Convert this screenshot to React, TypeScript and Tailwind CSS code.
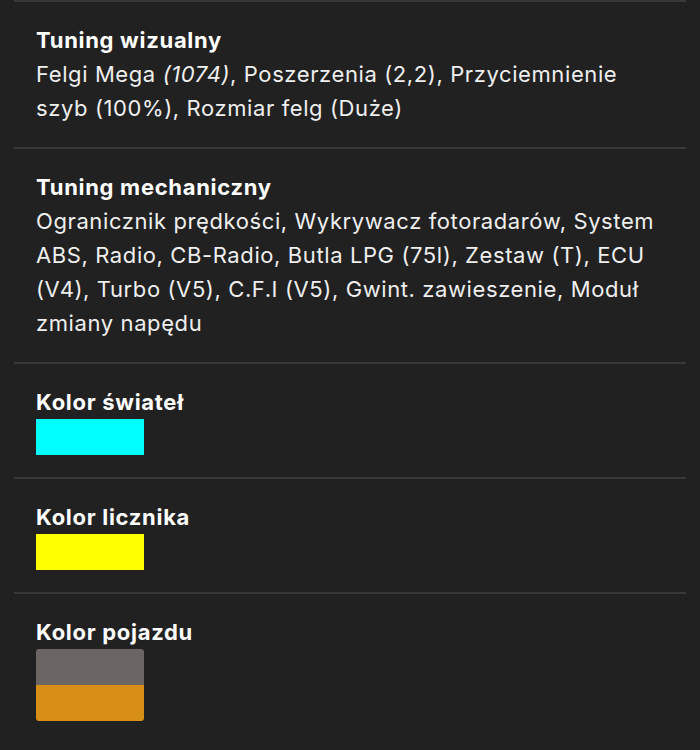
import React from "react";

type Section = {
  title: string;
  body?: React.ReactNode;
  swatches?: string[];
};

const sections: Section[] = [
  {
    title: "Tuning wizualny",
    body: (
      <>
        Felgi Mega <em>(1074)</em>, Poszerzenia (2,2), Przyciemnienie szyb (100%), Rozmiar felg (Duże)
      </>
    ),
  },
  {
    title: "Tuning mechaniczny",
    body: (
      <>
        Ogranicznik prędkości, Wykrywacz fotoradarów, System ABS, Radio, CB-Radio, Butla LPG (75l), Zestaw (T), ECU (V4), Turbo (V5), C.F.I (V5), Gwint. zawieszenie, Moduł zmiany napędu
      </>
    ),
  },
  { title: "Kolor świateł", swatches: ["#00ffff"] },
  { title: "Kolor licznika", swatches: ["#ffff00"] },
  { title: "Kolor pojazdu", swatches: ["#6b6664", "#d88f17"] },
];

export default function App() {
  return (
    <div
      className="min-h-[750px] bg-[#212121] px-[14px] text-[#efefef]"
      style={{ fontFamily: "Inter, 'Noto Sans', sans-serif" }}
    >
      {sections.map((s) => (
        <div key={s.title} className="border-t-2 border-[#383838] pl-[22px] pr-[24px] pt-[21px] pb-[22px]">
          <div className="text-[22px] font-bold leading-[34px] tracking-[0.7px] text-white">{s.title}</div>
          {s.body && <div className="text-[22px] leading-[34px] tracking-[0.6px]">{s.body}</div>}
          {s.swatches && (
            <div
              className={
                s.swatches.length > 1
                  ? "flex w-[108px] flex-col overflow-hidden rounded-[3px] blur-[0.6px]"
                  : "flex w-[108px] flex-col"
              }
            >
              {s.swatches.map((c) => (
                <div key={c} className="h-9 w-full" style={{ backgroundColor: c }} />
              ))}
            </div>
          )}
        </div>
      ))}
    </div>
  );
}
